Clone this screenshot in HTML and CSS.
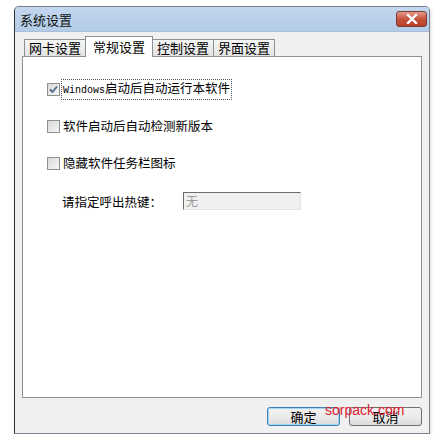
FILE: index.html
```html
<!DOCTYPE html>
<html lang="zh-CN">
<head>
  <meta charset="UTF-8">
  <title>系统设置</title>
  <link rel="stylesheet" href="styles.css">
</head>
<body>
  <div class="window">
    <div class="titlebar">
      <span class="title">系统设置</span>
      <span class="close">
        <svg width="12" height="10" viewBox="0 0 12 10"><path d="M2 1 L10 9 M10 1 L2 9" stroke="#fff" stroke-width="2.4" stroke-linecap="square"/></svg>
      </span>
    </div>
    <div class="content">
      <div class="tabs">
        <div class="tab">网卡设置</div>
        <div class="tab active">常规设置</div>
        <div class="tab">控制设置</div>
        <div class="tab">界面设置</div>
      </div>
      <div class="panel">
        <div class="row">
          <span class="check checked">
            <svg width="11" height="11" viewBox="0 0 11 11"><path d="M2 5.5 L4.5 8 L9 2.5" fill="none" stroke="#4a6b8c" stroke-width="1.8"/></svg>
          </span>
          <span class="label focus"><span class="latin">Windows</span>启动后自动运行本软件</span>
        </div>
        <div class="row">
          <span class="check"></span>
          <span class="label">软件启动后自动检测新版本</span>
        </div>
        <div class="row">
          <span class="check"></span>
          <span class="label">隐藏软件任务栏图标</span>
        </div>
        <div class="row hotkey">
          <span class="hk-label">请指定呼出热键：</span>
          <span class="input">无</span>
        </div>
      </div>
      <div class="footer">
        <span class="btn default">确定</span>
        <span class="btn">取消</span>
        <span class="watermark">sorpack.com</span>
      </div>
    </div>
  </div>
</body>
</html>
```

FILE: styles.css
```css
* {
  box-sizing: border-box;
}
body {
  margin: 0;
  padding: 6px 0 0 14px;
  background: #fff;
  font-family: "Noto Sans CJK SC", "DejaVu Sans", sans-serif;
  font-size: 12px;
  color: #000;
}
.window {
  width: 416px;
  height: 428px;
  border: 1px solid #7a8290;
  border-left-color: #333;
  border-radius: 5px 5px 0 0;
  background: #f0f0f0;
  box-shadow: 1px 1px 3px rgba(0, 0, 0, 0.15);
}
.titlebar {
  height: 25px;
  display: flex;
  align-items: center;
  justify-content: space-between;
  padding: 0 2px 0 5px;
  background: linear-gradient(to bottom, #c3d7ee, #b3cbe7);
  border-radius: 4px 4px 0 0;
  border-bottom: 1px solid #a9bfd9;
}
.title {
  font-size: 13px;
  color: #111;
}
.close {
  width: 31px;
  height: 16px;
  display: flex;
  align-items: center;
  justify-content: center;
  background: linear-gradient(to bottom, #e39c8c, #c6523c 50%, #b8412a);
  border: 1px solid #7a3a2e;
  border-radius: 3px;
}
.content {
  padding: 4px 7px 0 7px;
}
.tabs {
  display: flex;
  align-items: flex-end;
  margin-left: 2px;
  height: 20px;
  position: relative;
  z-index: 1;
}
.tab {
  height: 17px;
  line-height: 16px;
  padding: 0 4px;
  border: 1px solid #8c8f96;
  border-bottom: none;
  background: linear-gradient(to bottom, #f6f6f6, #e3e3e3);
  font-size: 13px;
  margin-right: -1px;
}
.tab.active {
  height: 21px;
  line-height: 19px;
  padding: 0 7px;
  background: #fff;
  margin-bottom: -1px;
  position: relative;
}
.panel {
  height: 342px;
  border: 1px solid #8c8f96;
  background: #fff;
  padding: 22px 0 0 24px;
  display: flex;
  flex-direction: column;
  gap: 17px;
}
.row {
  display: flex;
  align-items: center;
  height: 20px;
}
.check {
  width: 13px;
  height: 13px;
  border: 1px solid #8e8f8f;
  background: linear-gradient(135deg, #d8d8d8, #f7f7f7);
  display: flex;
  align-items: center;
  justify-content: center;
  margin-right: 1px;
}
.label {
  padding: 0 1px;
  line-height: 16px;
  font-size: 12.5px;
  border: 1px dotted transparent;
}
.label.focus {
  border-color: #555;
}
.latin {
  font-family: "Liberation Mono", monospace;
  font-size: 10px;
}
.hotkey {
  margin-top: 1px;
  padding-left: 15px;
}
.hk-label {
  width: 121px;
  font-size: 12.5px;
}
.input {
  width: 118px;
  height: 18px;
  line-height: 16px;
  padding-left: 2px;
  border: 1px solid #e4e4e4;
  border-top-color: #6c6c6c;
  border-left-color: #6c6c6c;
  background: #f0f0f0;
  color: #9a9a9a;
}
.footer {
  display: flex;
  justify-content: flex-end;
  gap: 9px;
  padding: 9px 0 0 0;
  position: relative;
}
.btn {
  width: 73px;
  height: 19px;
  line-height: 17px;
  text-align: center;
  border: 1px solid #707070;
  border-radius: 3px;
  background: linear-gradient(to bottom, #f2f2f2, #ebebeb 50%, #dcdcdc);
  font-size: 13px;
}
.btn.default {
  border-color: #3c7fb1;
  box-shadow: inset 0 0 0 1px #9fd5f5;
}
.watermark {
  position: absolute;
  left: 303px;
  top: 4px;
  color: #e0202f;
  font-family: "Liberation Sans", sans-serif;
  font-size: 14px;
}
```
